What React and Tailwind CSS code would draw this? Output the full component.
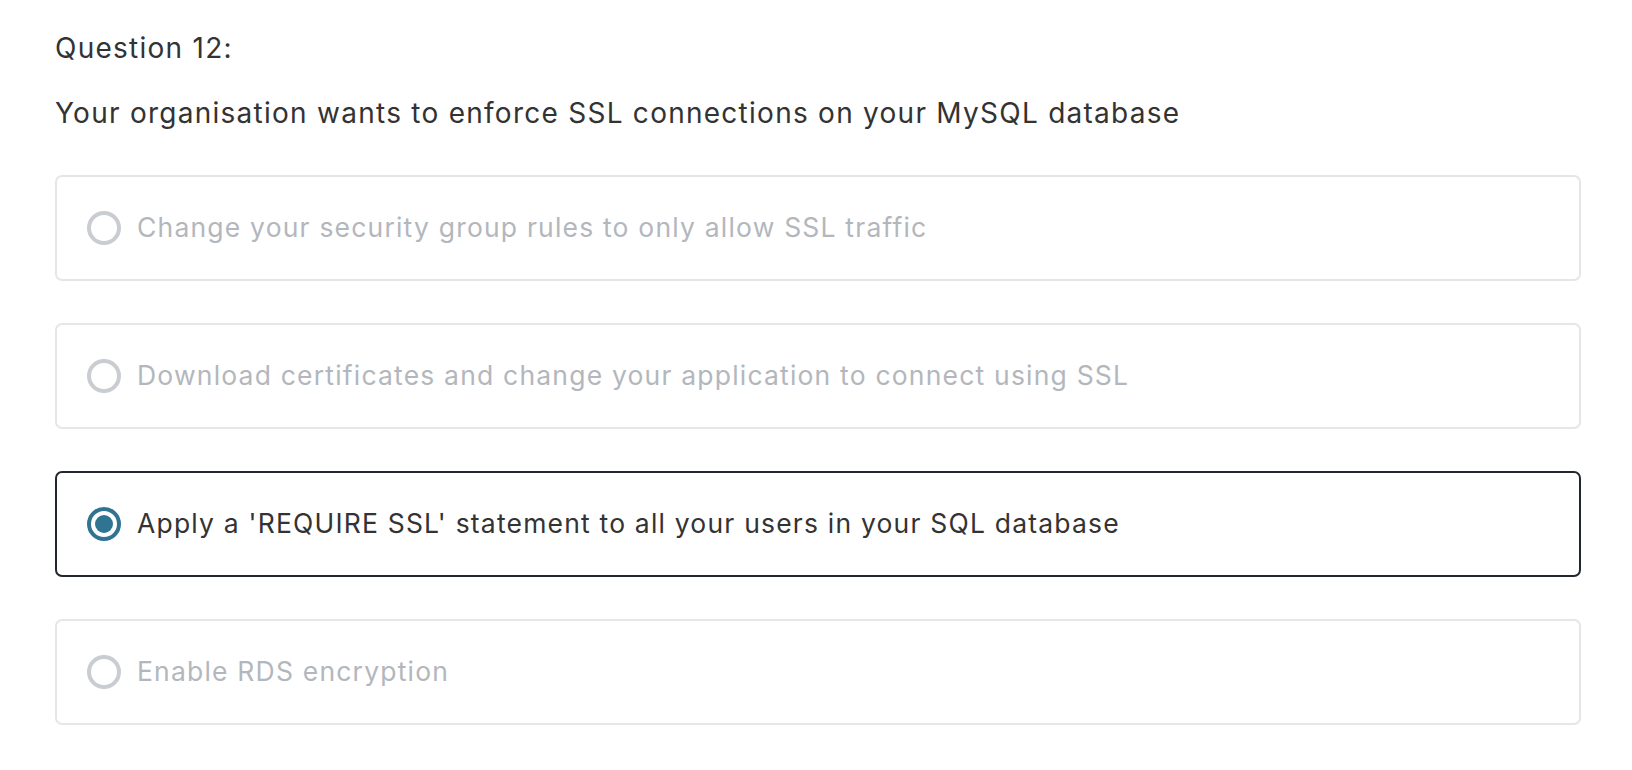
import React, { useState } from "react";

const options = [
  "Change your security group rules to only allow SSL traffic",
  "Download certificates and change your application to connect using SSL",
  "Apply a 'REQUIRE SSL' statement to all your users in your SQL database",
  "Enable RDS encryption",
];

function Radio({ checked }) {
  return (
    <span
      className={`flex items-center justify-center w-[34px] h-[34px] rounded-full border-[4px] shrink-0 ${
        checked ? "border-[#2f7592]" : "border-[#c9ccd1]"
      }`}
    >
      {checked && <span className="w-[18px] h-[18px] rounded-full bg-[#2f7592]" />}
    </span>
  );
}

export default function App() {
  const [selected, setSelected] = useState(2);

  return (
    <div className="min-h-screen bg-white font-['Inter',sans-serif] text-[28px] tracking-[0.045em] pl-[55px] pr-[51px] pt-[27px]">
      <p className="text-[#333333] leading-[42px]">Question 12:</p>
      <p className="text-[#333333] leading-[42px] mt-[23px]">
        Your organisation wants to enforce SSL connections on your MySQL database
      </p>
      <div className="flex flex-col gap-[42px] mt-[41px]">
        {options.map((opt, i) => (
          <button
            key={opt}
            type="button"
            onClick={() => setSelected(i)}
            className={`flex items-center gap-[16px] h-[106px] pl-[30px] rounded-[7px] border-2 text-left text-[26.5px] tracking-[0.045em] ${
              selected === i
                ? "border-[#22262e] text-[#333333]"
                : "border-[#e6e6e6] text-[#b3b7bd]"
            }`}
          >
            <Radio checked={selected === i} />
            <span>{opt}</span>
          </button>
        ))}
      </div>
    </div>
  );
}
